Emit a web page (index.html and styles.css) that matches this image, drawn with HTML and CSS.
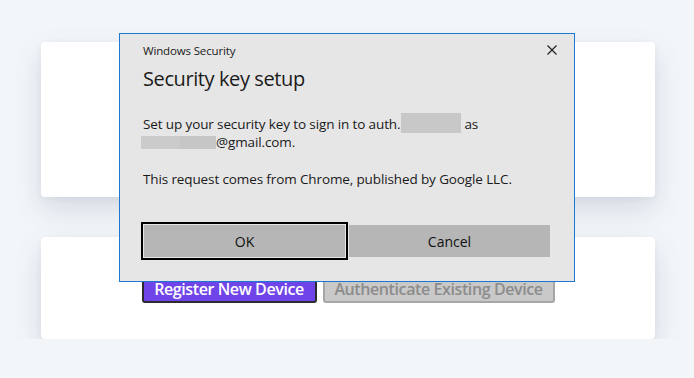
FILE: index.html
```html
<!DOCTYPE html>
<html lang="en">
<head>
  <meta charset="UTF-8" />
  <meta name="viewport" content="width=device-width, initial-scale=1.0" />
  <title>Security Key</title>
  <link rel="stylesheet" href="styles.css">
</head>
<body>
  <div class="page">
    <div class="card card-top"></div>
    <div class="card card-actions">
      <div class="actions">
        <button class="btn btn-primary">Register New Device</button>
        <button class="btn btn-disabled" disabled>Authenticate Existing Device</button>
      </div>
    </div>
  </div>

  <div class="dialog">
    <div class="dialog-head">
      <span class="dialog-app">Windows Security</span>
      <svg class="dialog-close" width="10" height="10" viewBox="0 0 10 10">
        <path d="M0.5 0.5 L9.5 9.5 M9.5 0.5 L0.5 9.5" stroke="#1b1b1b" stroke-width="1.1" fill="none" />
      </svg>
    </div>
    <div class="dialog-title">Security key setup</div>
    <p class="dialog-text">
      Set up your security key to sign in to auth.<span class="redact redact-domain"></span>as<br>
      <span class="redact redact-user"></span>@gmail.com.
    </p>
    <p class="dialog-text dialog-source">This request comes from Chrome, published by Google LLC.</p>
    <div class="dialog-buttons">
      <button class="dlg-btn dlg-btn-focus">OK</button>
      <button class="dlg-btn">Cancel</button>
    </div>
  </div>
</body>
</html>
```

FILE: styles.css
```css
body {
  margin: 0;
  background-color: #f3f6f9;
  font-family: "Open Sans", "Noto Sans", sans-serif;
}

.page {
  padding: 42px 39px 0 41px;
}

.card {
  background-color: #fff;
  border-radius: 4px;
  box-shadow: 0 12px 30px rgba(30, 50, 90, 0.14), 0 2px 6px rgba(30, 50, 90, 0.05);
}

.card-top {
  height: 155px;
}

.card-actions {
  margin-top: 40px;
  height: 102px;
  display: flex;
  justify-content: center;
  align-items: center;
}

.actions {
  display: flex;
  gap: 6px;
  margin-top: 2px;
}

.btn {
  height: 28px;
  padding: 0;
  border-radius: 3px;
  font-family: "Open Sans", sans-serif;
  font-weight: 600;
  font-size: 16px;
  letter-spacing: -0.4px;
}

.btn-primary {
  width: 175px;
  background-color: #6f45e9;
  color: #fff;
  border: 2px solid #2c2c30;
}

.btn-disabled {
  width: 232px;
  background-color: #c9c9c9;
  color: #8c8c8c;
  border: 2px solid #a6a6a6;
}

/* windows security overlay */
.dialog {
  position: absolute;
  left: 119px;
  top: 33px;
  width: 454px;
  height: 247px;
  border: 1px solid #1a78d2;
  background-color: #e6e6e6;
  color: #1a1a1a;
  display: flex;
  flex-direction: column;
}

.dialog-head {
  display: flex;
  justify-content: space-between;
  align-items: center;
  padding: 7px 17px 0 23px;
  height: 18px;
}

.dialog-app {
  font-size: 11.5px;
  letter-spacing: -0.15px;
}

.dialog-title {
  margin-top: 6px;
  padding-left: 23px;
  font-size: 20px;
  line-height: 28px;
  letter-spacing: -0.4px;
}

.dialog-text {
  margin: 22px 0 0;
  padding-left: 23px;
  font-size: 13.5px;
  line-height: 18px;
  letter-spacing: -0.12px;
}

.dialog-source {
  margin-top: 19px;
}

.redact {
  display: inline-block;
  background-color: #c8c8c8;
  vertical-align: middle;
}

.redact-domain {
  width: 60px;
  height: 20px;
  margin: -4px 3px 0 1px;
}

.redact-user {
  width: 75px;
  height: 13px;
  margin: -2px 0 0 -2px;
  background: linear-gradient(to right, #cbcbcb 0 39px, #c6c6c6 39px);
}

.dialog-buttons {
  margin-top: auto;
  padding: 0 0 24px 24px;
  display: flex;
  gap: 4px;
}

.dlg-btn {
  width: 201px;
  height: 32px;
  border: none;
  padding: 0;
  background-color: #b6b6b6;
  color: #111;
  font-family: "Open Sans", sans-serif;
  font-size: 14px;
}

.dlg-btn-focus {
  outline: 2px solid #000;
  outline-offset: 1px;
}
```
